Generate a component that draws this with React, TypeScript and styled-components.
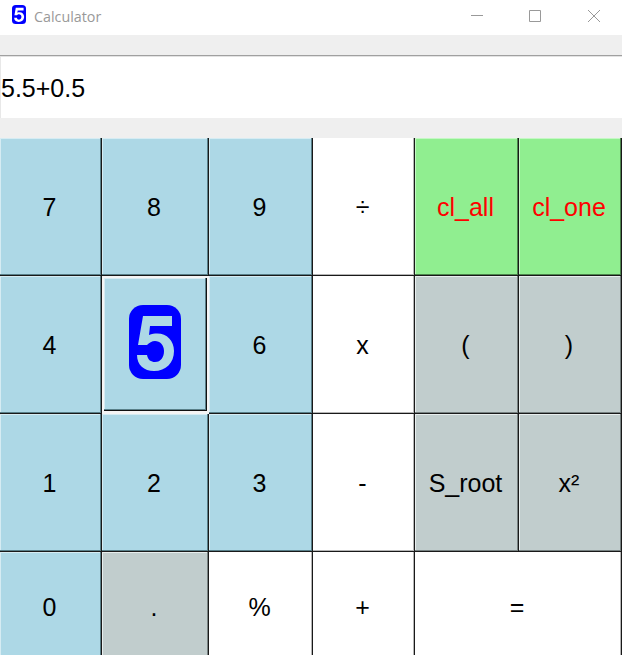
import React from "react";
import styled, { createGlobalStyle } from "styled-components";

const Global = createGlobalStyle`
  * { box-sizing: border-box; }
  html, body { margin: 0; background: #efefef; overflow: hidden; }
`;

const Window = styled.main`
  width: 622px;
  height: 655px;
  overflow: hidden;
  background: #efefef;
  font-family: "Liberation Sans", Arial, sans-serif;
  font-size: 25px;
  color: #000;
`;

const TitleBar = styled.header`
  display: flex;
  align-items: center;
  height: 35px;
  padding-left: 12px;
  background: #fff;
`;

const AppIcon = styled.svg`
  width: 14px;
  height: 19px;
  margin-top: -7px;
`;

const Title = styled.h1`
  flex: 1;
  margin: -3px 0 0 8px;
  font: 400 14.3px "Open Sans", sans-serif;
  color: #999;
`;

const WindowButton = styled.button`
  display: grid;
  place-items: center;
  width: 58.5px;
  height: 31px;
  padding: 0;
  border: 0;
  background: transparent;
`;

const Controls = styled.div`
  display: flex;
  align-self: flex-start;
  margin-right: -1px;
`;

const Display = styled.output`
  display: flex;
  align-items: center;
  height: 63px;
  margin: 20px 0;
  padding-left: 1px;
  padding-top: 2px;
  background: #fff;
  border-top: 1px solid #a0a0a0;
  box-shadow: inset 0 1px #e3e3e3, inset 1px 0 #e8e8e8;
`;

const Keypad = styled.section`
  display: grid;
  grid-template-columns: 102px 107px 104px 102px 104px 103px;
  grid-template-rows: 138px 138px 138px 110px;
`;

const palettes = {
  digit: { face: "#add8e6", ink: "#000", light: "#d6ecf3", dark: "#587f89" },
  operator: { face: "#fff", ink: "#000", light: "#fff", dark: "#b5b5b5" },
  clear: { face: "#90ee90", ink: "#ff0000", light: "#c4f8c4", dark: "#4c844c" },
  special: { face: "#c1cdcd", ink: "#000", light: "#e8eeee", dark: "#778181" },
};

type Kind = keyof typeof palettes;

const Key = styled.button<{ $kind: Kind; $wide?: boolean }>`
  display: flex;
  align-items: center;
  justify-content: center;
  grid-column: span ${(p) => (p.$wide ? 2 : 1)};
  padding: 0 3px 0 0;
  border: 0;
  font: inherit;
  color: ${(p) => palettes[p.$kind].ink};
  background: ${(p) => palettes[p.$kind].face};
  box-shadow:
    inset -1px -1px #191919,
    inset -2px -2px ${(p) => palettes[p.$kind].dark},
    inset 1px 1px ${(p) => palettes[p.$kind].light};
`;

const FocusedKey = styled(Key)`
  padding: 0 2px 5px 0;
  border: solid #f5f5f5;
  border-width: 2px 2px 3px;
  box-shadow:
    inset -1px -1px #111,
    inset -2px -2px #587f89,
    inset 1px 1px #d6ecf3;
`;

const FiveBadge = styled.svg`
  width: 52px;
  height: 74px;
`;

const keys: { label: string; kind: Kind; wide?: boolean }[] = [
  { label: "7", kind: "digit" },
  { label: "8", kind: "digit" },
  { label: "9", kind: "digit" },
  { label: "÷", kind: "operator" },
  { label: "cl_all", kind: "clear" },
  { label: "cl_one", kind: "clear" },
  { label: "4", kind: "digit" },
  { label: "5", kind: "digit" },
  { label: "6", kind: "digit" },
  { label: "x", kind: "operator" },
  { label: "(", kind: "special" },
  { label: ")", kind: "special" },
  { label: "1", kind: "digit" },
  { label: "2", kind: "digit" },
  { label: "3", kind: "digit" },
  { label: "-", kind: "operator" },
  { label: "S_root", kind: "special" },
  { label: "x²", kind: "special" },
  { label: "0", kind: "digit" },
  { label: ".", kind: "special" },
  { label: "%", kind: "operator" },
  { label: "+", kind: "operator" },
  { label: "=", kind: "operator", wide: true },
];

function FiveMark({ color }: { color: string }) {
  return (
    <>
      <rect width="52" height="74" rx="14" fill="#0000ff" />
      <path
        d="M14 11H43V21H21L20 30C34 25 45 33 45 46C45 58 37 66 25 66C15 66 8 60 8 50H18C19 55 22 57 26 57C32 57 35 52 35 46C35 40 31 36 26 36C23 36 20 38 18 40H9Z"
        fill={color}
      />
    </>
  );
}

export default function App() {
  return (
    <>
      <Global />
      <Window>
        <TitleBar>
          <AppIcon viewBox="0 0 52 74" preserveAspectRatio="none" aria-hidden="true">
            <FiveMark color="#fff" />
          </AppIcon>
          <Title>Calculator</Title>
          <Controls>
            <WindowButton aria-label="Minimize">
              <svg width="12" height="12" stroke="#999" fill="none"><path d="M0 5.5H12" /></svg>
            </WindowButton>
            <WindowButton aria-label="Maximize">
              <svg width="12" height="12" stroke="#999" fill="none"><path d="M.5 .5H11.5V11.5H.5Z" /></svg>
            </WindowButton>
            <WindowButton aria-label="Close">
              <svg width="12" height="12" stroke="#999" fill="none"><path d="M0 0L12 12M12 0L0 12" /></svg>
            </WindowButton>
          </Controls>
        </TitleBar>
        <Display>5.5+0.5</Display>
        <Keypad>
          {keys.map(({ label, kind, wide }) =>
            label === "5" ? (
              <FocusedKey key={label} $kind={kind} aria-label="5">
                <FiveBadge viewBox="0 0 52 74" aria-hidden="true">
                  <FiveMark color="#add8e6" />
                </FiveBadge>
              </FocusedKey>
            ) : (
              <Key key={label} $kind={kind} $wide={wide}>{label}</Key>
            )
          )}
        </Keypad>
      </Window>
    </>
  );
}
